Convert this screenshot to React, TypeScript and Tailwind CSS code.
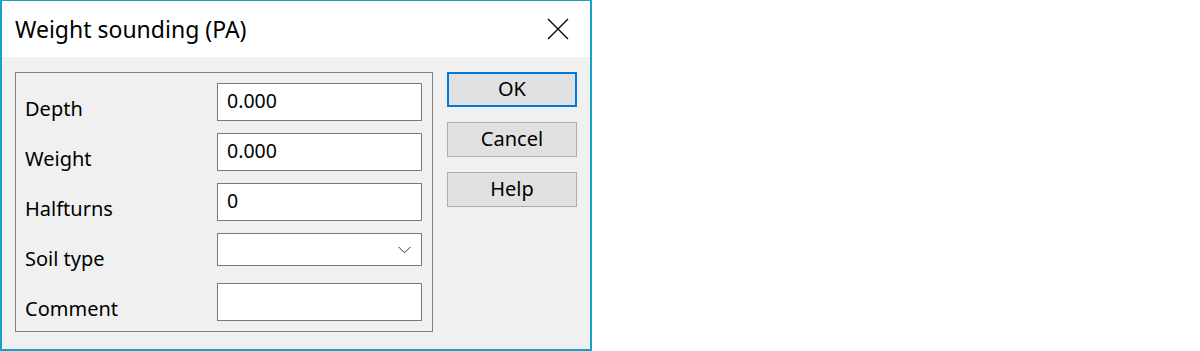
import React from "react";

const fields = [
  { label: "Depth", value: "0.000", kind: "text" },
  { label: "Weight", value: "0.000", kind: "text" },
  { label: "Halfturns", value: "0", kind: "text" },
  { label: "Soil type", value: "", kind: "combo" },
  { label: "Comment", value: "", kind: "text" },
];

function CloseIcon() {
  return (
    <svg width="22" height="22" viewBox="0 0 22 22" className="block">
      <path d="M1 1 L21 21 M21 1 L1 21" stroke="#000" strokeWidth="1.3" fill="none" />
    </svg>
  );
}

function Chevron() {
  return (
    <svg width="13" height="8" viewBox="0 0 13 8" className="block">
      <path d="M0.5 0.8 L6.5 6.8 L12.5 0.8" stroke="#333" strokeWidth="1" fill="none" />
    </svg>
  );
}

export default function App() {
  return (
    <div className="w-[1200px] h-[351px] bg-white font-['Noto_Sans',sans-serif] text-black">
      <div className="w-[592px] h-[351px] flex flex-col border-t border-l-2 border-r-2 border-b-2 border-[#18a1c3]">
        {/* title bar */}
        <div className="h-[56px] bg-white flex items-center justify-between pl-[13px] pr-[21px] shrink-0">
          <span className="text-[23px] leading-none">Weight sounding (PA)</span>
          <CloseIcon />
        </div>

        {/* body */}
        <div className="flex-1 bg-[#f0f0f0] flex pt-[15px] pl-[13px] gap-[14px]">
          <div className="w-[418px] h-[260px] border border-[#7f7f7f] flex flex-col pt-[10px]">
            {fields.map((f) => (
              <div key={f.label} className="h-[50px] flex items-start shrink-0">
                <div className="w-[201px] pl-[9px] pt-[14px] text-[20px] leading-[24px]">{f.label}</div>
                {f.kind === "combo" ? (
                  <div className="w-[205px] h-[33px] bg-white border border-[#7a7a7a] flex items-center justify-end pr-[10px]">
                    <Chevron />
                  </div>
                ) : (
                  <div className="w-[205px] h-[38px] bg-white border border-[#7a7a7a] flex items-center pl-[9px] text-[19.5px] leading-none pb-[3px]">
                    {f.value}
                  </div>
                )}
              </div>
            ))}
          </div>

          <div className="flex flex-col gap-[15px]">
            <button className="w-[130px] h-[35px] bg-[#e1e1e1] border-2 border-[#0078d7] text-[20px] leading-none pb-[1px]">
              OK
            </button>
            <button className="w-[130px] h-[35px] bg-[#e1e1e1] border border-[#adadad] text-[20px] leading-none pb-[1px]">
              Cancel
            </button>
            <button className="w-[130px] h-[35px] bg-[#e1e1e1] border border-[#adadad] text-[20px] leading-none pb-[1px]">
              Help
            </button>
          </div>
        </div>
      </div>
    </div>
  );
}
